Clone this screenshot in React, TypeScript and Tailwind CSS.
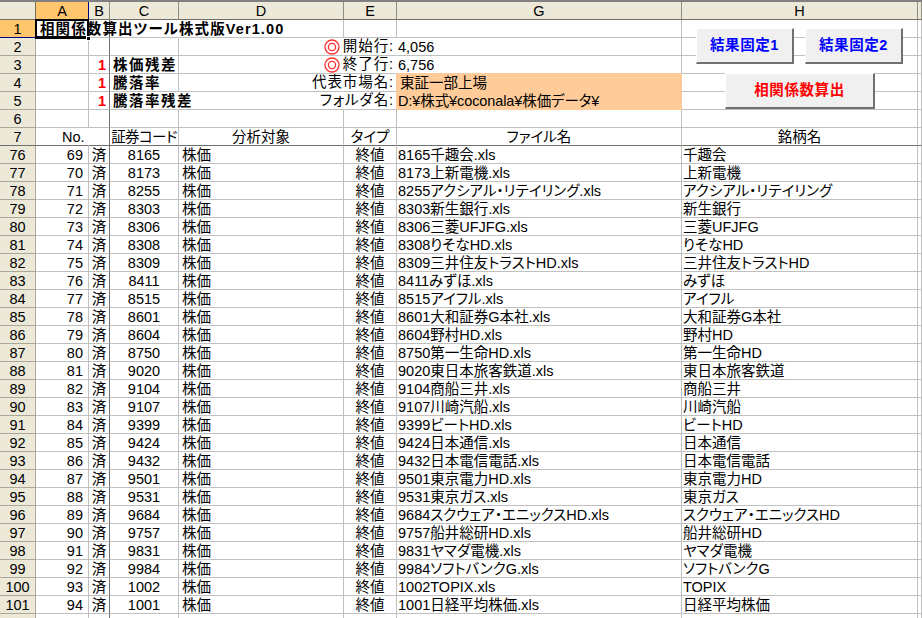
import React from "react";

const rows: [number, number, string, string, string][] = [
  [76, 69, "8165", "8165千趣会.xls", "千趣会"],
  [77, 70, "8173", "8173上新電機.xls", "上新電機"],
  [78, 71, "8255", "8255アクシアル・リテイリング.xls", "アクシアル・リテイリング"],
  [79, 72, "8303", "8303新生銀行.xls", "新生銀行"],
  [80, 73, "8306", "8306三菱UFJFG.xls", "三菱UFJFG"],
  [81, 74, "8308", "8308りそなHD.xls", "りそなHD"],
  [82, 75, "8309", "8309三井住友トラストHD.xls", "三井住友トラストHD"],
  [83, 76, "8411", "8411みずほ.xls", "みずほ"],
  [84, 77, "8515", "8515アイフル.xls", "アイフル"],
  [85, 78, "8601", "8601大和証券G本社.xls", "大和証券G本社"],
  [86, 79, "8604", "8604野村HD.xls", "野村HD"],
  [87, 80, "8750", "8750第一生命HD.xls", "第一生命HD"],
  [88, 81, "9020", "9020東日本旅客鉄道.xls", "東日本旅客鉄道"],
  [89, 82, "9104", "9104商船三井.xls", "商船三井"],
  [90, 83, "9107", "9107川崎汽船.xls", "川崎汽船"],
  [91, 84, "9399", "9399ビートHD.xls", "ビートHD"],
  [92, 85, "9424", "9424日本通信.xls", "日本通信"],
  [93, 86, "9432", "9432日本電信電話.xls", "日本電信電話"],
  [94, 87, "9501", "9501東京電力HD.xls", "東京電力HD"],
  [95, 88, "9531", "9531東京ガス.xls", "東京ガス"],
  [96, 89, "9684", "9684スクウェア・エニックスHD.xls", "スクウェア・エニックスHD"],
  [97, 90, "9757", "9757船井総研HD.xls", "船井総研HD"],
  [98, 91, "9831", "9831ヤマダ電機.xls", "ヤマダ電機"],
  [99, 92, "9984", "9984ソフトバンクG.xls", "ソフトバンクG"],
  [100, 93, "1002", "1002TOPIX.xls", "TOPIX"],
  [101, 94, "1001", "1001日経平均株価.xls", "日経平均株価"],
  [102, 0, "", "", ""],
];

const cols = ["A", "B", "C", "D", "E", "G", "H", ""];
const GRID = "grid grid-cols-[36px_53px_21px_69px_165px_53px_285px_236px_4px]";

function C({ className = "", children }: { className?: string; children?: React.ReactNode }) {
  return (
    <div className={`h-[18px] whitespace-nowrap border-b border-r leading-[19px] ${className}`}>
      {children}
    </div>
  );
}

const L = "border-[#c0c0c0]";
const RH = "border-[#aca899] bg-[#ece9d8] text-center";

function TopRow({ n, b, c, d, e, g, h }: any) {
  return (
    <div className={GRID}>
      <C className={RH}>{n}</C>
      <C className={L} />
      {b}
      {c}
      {d}
      {e}
      {g}
      {h ?? <C className={L} />}
      <C className={L} />
    </div>
  );
}

const BCell = ({ v }: { v?: string }) => (
  <C className="border-b-[#c0c0c0] border-r-[#6f6f6f] pr-[3px] text-right font-bold text-[#ff0000]">{v}</C>
);
const Bold = ({ v, open }: { v?: string; open?: boolean }) => (
  <C className={`${L} ${open ? "border-r-transparent" : ""} pl-[3px] font-bold tracking-[1.5px]`}>{v}</C>
);
const Ring = () => (
  <svg width="16" height="16" viewBox="0 0 16 16" className="mr-[3px] shrink-0" fill="none" stroke="#ff3030">
    <circle cx="8" cy="8" r="7" strokeWidth="1.3" />
    <circle cx="8" cy="8" r="3.6" strokeWidth="1.3" />
  </svg>
);
const Label = ({ ring, v, orange }: { ring?: boolean; v: string; orange?: boolean }) => (
  <C className={orange ? `${L} border-r-[#ffcc99]` : `${L} border-r-transparent`}>
    <div className="flex h-full w-full items-center justify-end pr-[2px]">
      <span className="-ml-[60px] flex items-center tracking-[0.9px]">
        {ring && <Ring />}
        {v}
      </span>
    </div>
  </C>
);

const BTN =
  "absolute z-20 h-[36px] border-b-2 border-r-2 border-t border-l border-b-[#707070] border-r-[#707070] border-t-white border-l-white bg-[#f0f0f0] font-bold tracking-[0.6px]";

export default function App() {
  return (
    <div className="relative h-[618px] w-[922px] overflow-hidden bg-white text-[14.5px] text-black [font-family:'Liberation_Sans','Noto_Sans_CJK_JP',sans-serif] [font-feature-settings:'palt']">
      <div className="h-[2px] bg-[#808080]" />
      <div className={GRID}>
        <div className="h-[18px] border-b border-r border-[#716f64] bg-[#ece9d8]" />
        {cols.map((c, i) => (
          <div
            key={i}
            className={
              i === 0
                ? "h-[18px] border-b border-r border-b-[#716f64] border-r-[#000080] bg-[#ffc66e] text-center leading-[18px]"
                : "h-[18px] border-b border-r border-[#8f8d80] border-b-[#716f64] bg-[#ece9d8] text-center leading-[18px]"
            }
          >
            {c}
          </div>
        ))}
      </div>

      <div className={GRID}>
        <C className="border-b-[#000080] border-r-[#aca899] bg-[#ffc66e] text-center">1</C>
        <C className="relative z-10 border-transparent pl-[4px] font-bold tracking-[1.1px]">相関係数算出ツール株式版Ver1.00</C>
        <C className="border-b-[#c0c0c0] border-r-[#6f6f6f]" />
        <C className="border-b-[#c0c0c0] border-r-transparent" />
        <C className={L} />
        <C className={L} />
        <C className={L} />
        <C className={L} />
        <C className={L} />
      </div>

      <TopRow
        n="2"
        b={<BCell />}
        c={<C className={L} />}
        d={<C className={`${L} border-r-transparent`} />}
        e={<Label ring v="開始行:" />}
        g={<C className={`${L} pl-[1px]`}>4,056</C>}
      />
      <TopRow
        n="3"
        b={<BCell v="1" />}
        c={<Bold v="株価残差" />}
        d={<C className={`${L} border-r-transparent`} />}
        e={<Label ring v="終了行:" />}
        g={<C className={`${L} border-b-[#ffcc99] pl-[1px]`}>6,756</C>}
      />
      <TopRow
        n="4"
        b={<BCell v="1" />}
        c={<Bold v="騰落率" />}
        d={<C className={`${L} border-r-transparent`} />}
        e={<Label v="代表市場名:" orange />}
        g={<C className="border-[#ffcc99] bg-[#ffcc99] pl-[3px]">東証一部上場</C>}
      />
      <TopRow
        n="5"
        b={<BCell v="1" />}
        c={<Bold v="騰落率残差" open />}
        d={<C className={`${L} border-r-transparent`} />}
        e={<Label v="フォルダ名:" orange />}
        g={<C className="border-[#ffcc99] bg-[#ffcc99] pl-[1px] tracking-[-0.1px]">D:¥株式¥coconala¥株価データ¥</C>}
      />
      <TopRow
        n="6"
        b={<BCell />}
        c={<C className={L} />}
        d={<C className={L} />}
        e={<C className={L} />}
        g={<C className={L} />}
      />

      <div className={GRID}>
        <C className="border-b-[#6f6f6f] border-r-[#aca899] bg-[#ece9d8] text-center">7</C>
        <C className="border-b-[#6f6f6f] border-r-transparent pl-[26px]">No.</C>
        <C className="border-b-[#6f6f6f] border-r-[#6f6f6f]" />
        <C className="border-b-[#6f6f6f] border-r-[#c0c0c0] text-center tracking-[-0.6px]">証券コード</C>
        <C className="border-b-[#6f6f6f] border-r-[#c0c0c0] text-center">分析対象</C>
        <C className="border-b-[#6f6f6f] border-r-[#c0c0c0] text-center">タイプ</C>
        <C className="border-b-[#6f6f6f] border-r-[#c0c0c0] text-center">ファイル名</C>
        <C className="border-b-[#6f6f6f] border-r-[#c0c0c0] text-center">銘柄名</C>
        <C className="border-b-[#6f6f6f] border-r-[#c0c0c0]" />
      </div>

      {rows.map(([n, no, code, file, name]) => (
        <div key={n} className={GRID}>
          <C className={RH}>{n === 102 ? "" : n}</C>
          <C className={`${L} pr-[5px] text-right`}>{no || ""}</C>
          <C className="border-b-[#c0c0c0] border-r-[#6f6f6f] text-center">{code ? "済" : ""}</C>
          <C className={`${L} text-center`}>{code}</C>
          <C className={`${L} pl-[3px]`}>{code ? "株価" : ""}</C>
          <C className={`${L} text-center`}>{code ? "終値" : ""}</C>
          <C className={`${L} pl-[1px]`}>{file}</C>
          <C className={`${L} pl-[1px]`}>{name}</C>
          <C className={L} />
        </div>
      ))}

      {/* selection box on A1 */}
      <div className="pointer-events-none absolute left-[35px] top-[19px] z-20 h-[20px] w-[54px] border-2 border-b-[3px] border-black" />
      <div className="absolute left-[86px] top-[36px] z-30 h-[5px] w-[5px] border border-white bg-black" />

      {/* floating buttons */}
      <button className={`${BTN} left-[696px] top-[28px] w-[98px] text-[#0000ff]`}>結果固定1</button>
      <button className={`${BTN} left-[805px] top-[28px] w-[98px] text-[#0000ff]`}>結果固定2</button>
      <button className={`${BTN} left-[725px] top-[73px] w-[150px] text-[#ff0000]`}>相関係数算出</button>
    </div>
  );
}
